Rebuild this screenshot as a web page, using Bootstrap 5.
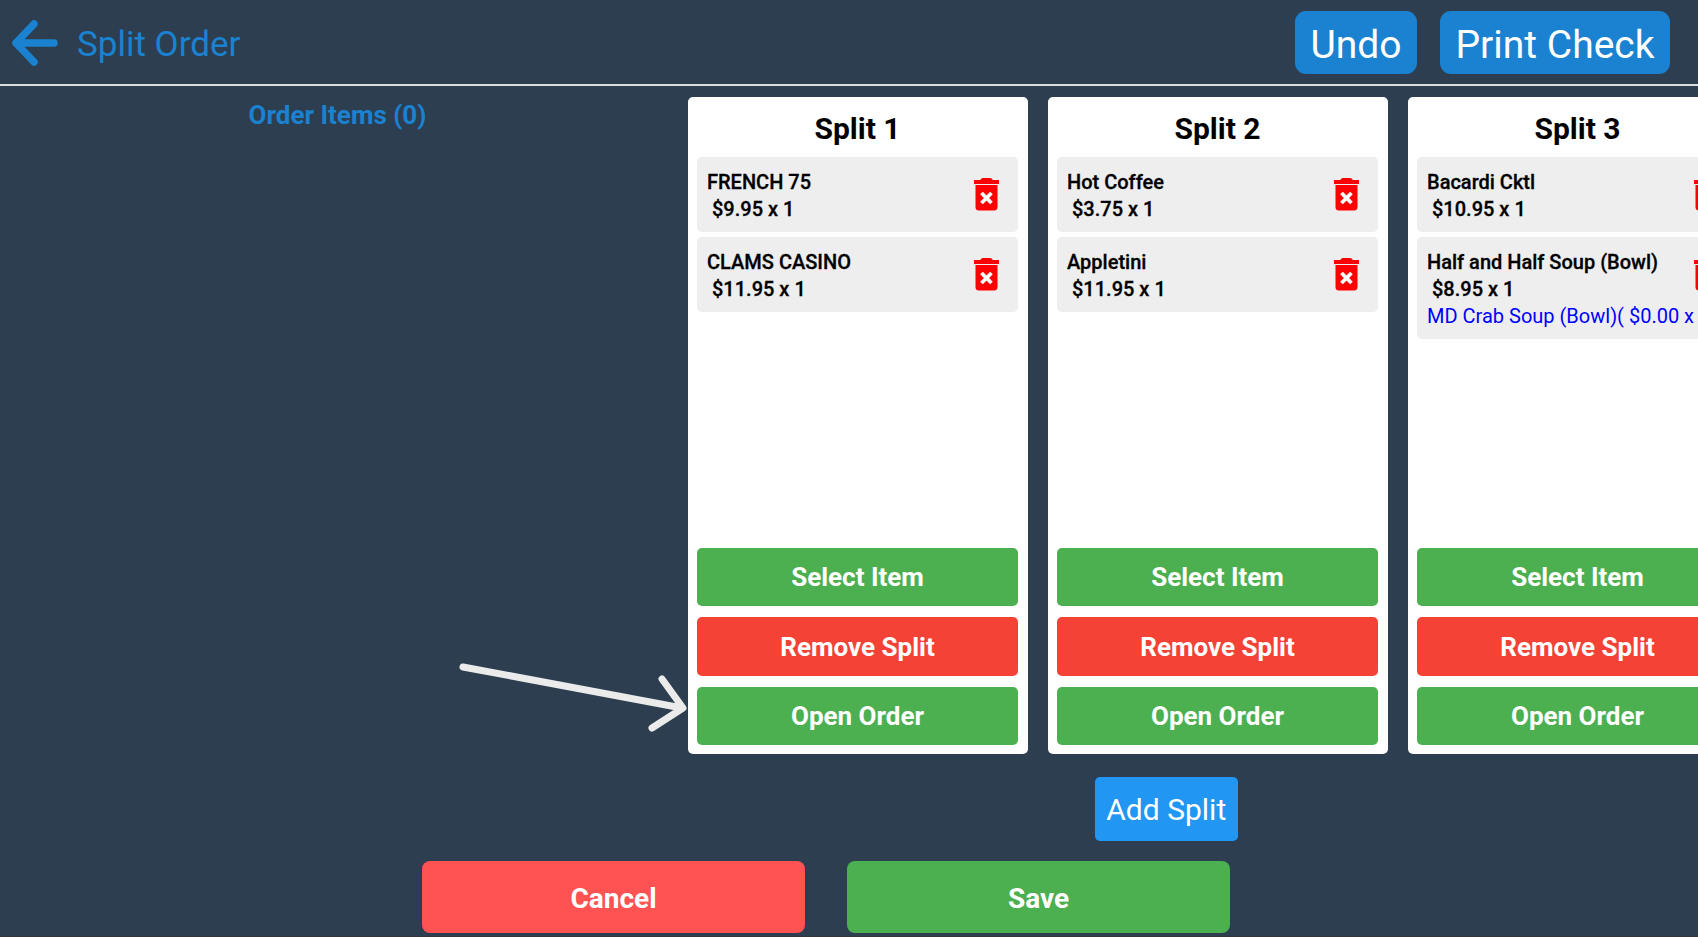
<!DOCTYPE html>
<html lang="en">
<head>
<meta charset="utf-8">
<title>Split Order</title>
<link href="https://cdn.jsdelivr.net/npm/bootstrap@5.3.0/dist/css/bootstrap.min.css" rel="stylesheet">
<style>
html { height: 100%; background: #33363a; overflow: hidden; }
body { height: 935.5px; background: #2c3e50; font-family: Roboto, "Liberation Sans", sans-serif; overflow: hidden; position: relative; color: #000; }
.top-bar { height: 86px; border-bottom: 2px solid #ddd; padding: 11px 28px 0 13px; }
.back-ico { width: 46px; height: 42px; margin-top: 11px; overflow: visible; }
.page-title { color: #1a82d0; font-size: 35px; line-height: 42px; margin: 13px 0 0 18px; font-weight: 400; }
.top-btn { background: #1a82d0; color: #fff; font-size: 39px; line-height: 46px; border: 0; border-radius: 11px; height: 63px; padding: 11px 15.500px 6px; }
.top-btn + .top-btn { margin-left: 23px; }
.content-row { height: 755px; }
.left-col { width: 675px; flex: none; text-align: center; padding-top: 14px; }
.left-title { color: #1a82d0; font-size: 26px; font-weight: 700; line-height: 30px; }
.right-col { width: 983px; flex: none; padding: 11px 0 0 12.500px; }
.split-strip { gap: 20px; }
.split-panel { width: 340px; height: 657px; flex: none; background: #fff; border-radius: 5px; padding: 0 9.500px 9px; }
.split-title { font-size: 30px; font-weight: 700; text-align: center; line-height: 36px; padding: 14px 0 10px; }
.order-line { background: #eee; border-radius: 5px; padding: 12px 10px 9px; font-size: 20px; line-height: 27px; font-weight: 500; margin-bottom: 5px; white-space: nowrap; overflow: hidden; -webkit-text-stroke: 0.3px #000; }
.price-line { padding-left: 5px; }
.mod-line { color: #00f; font-weight: 400; -webkit-text-stroke: 0; }
.trash-ico { width: 25px; height: 33px; flex: none; margin: 9px 9px 0 0; }
.order-text { flex: 1 1 auto; min-width: 0; }
.act-btn { display: block; width: 100%; height: 58.500px; border: 0; border-radius: 5px; color: #fff; font-size: 26px; font-weight: 700; margin-top: 11px; padding: 2px 0 0; }
.act-green { background: #4caf50; }
.act-red { background: #f44336; }
.add-wrap { padding: 23px 13px 0 0; }
.add-btn { background: #2196f3; color: #fff; border: 0; border-radius: 5px; width: 143px; height: 64px; font-size: 30px; padding: 0; }
.foot-row { gap: 42px; padding: 20px 46px 0 0; }
.foot-btn { width: 383px; height: 72px; border: 0; border-radius: 8px; color: #fff; font-size: 28px; font-weight: 700; padding: 4px 0 0; }
.foot-red { background: #ff5252; }
.foot-green { background: #4caf50; }
.note-arrow { position: absolute; left: 450px; top: 650px; width: 250px; height: 90px; pointer-events: none; }
</style>
</head>
<body>
<svg width="0" height="0" class="d-block position-absolute">
  <symbol id="trash" viewBox="0 0 25 33">
    <path d="M6 2.500Q6.500 0 9 0H16Q18.500 0 19 2.500Z" fill="#f00"/>
    <rect x="0" y="2" width="25" height="4" fill="#f00"/>
    <path d="M1.500 7H23.500V29Q23.500 32.500 20 32.500H5Q1.500 32.500 1.500 29Z" fill="#f00"/>
    <path d="M7.500 15L17.500 25M17.500 15L7.500 25" stroke="#fff" stroke-width="3.800" fill="none"/>
  </symbol>
</svg>

<header class="top-bar d-flex justify-content-between">
  <div class="d-flex">
    <svg class="back-ico" viewBox="0 0 46 42" aria-hidden="true"><path d="M3 21H41M21 2L3 21L21 40" fill="none" stroke="#1a82d0" stroke-width="7.500" stroke-linecap="round" stroke-linejoin="round"/></svg>
    <h1 class="page-title">Split Order</h1>
  </div>
  <div class="d-flex">
    <button class="top-btn">Undo</button>
    <button class="top-btn">Print Check</button>
  </div>
</header>

<main class="content-row d-flex">
  <div class="left-col"><div class="left-title">Order Items (0)</div></div>
  <div class="right-col">
    <div class="split-strip d-flex">
      <section class="split-panel d-flex flex-column">
        <div class="split-title">Split 1</div>
        <div class="order-line d-flex"><div class="order-text">FRENCH 75<div class="price-line">$9.95 x 1</div></div><svg class="trash-ico"><use href="#trash"/></svg></div>
        <div class="order-line d-flex"><div class="order-text">CLAMS CASINO<div class="price-line">$11.95 x 1</div></div><svg class="trash-ico"><use href="#trash"/></svg></div>
        <div class="mt-auto">
          <button class="act-btn act-green">Select Item</button>
          <button class="act-btn act-red">Remove Split</button>
          <button class="act-btn act-green">Open Order</button>
        </div>
      </section>
      <section class="split-panel d-flex flex-column">
        <div class="split-title">Split 2</div>
        <div class="order-line d-flex"><div class="order-text">Hot Coffee<div class="price-line">$3.75 x 1</div></div><svg class="trash-ico"><use href="#trash"/></svg></div>
        <div class="order-line d-flex"><div class="order-text">Appletini<div class="price-line">$11.95 x 1</div></div><svg class="trash-ico"><use href="#trash"/></svg></div>
        <div class="mt-auto">
          <button class="act-btn act-green">Select Item</button>
          <button class="act-btn act-red">Remove Split</button>
          <button class="act-btn act-green">Open Order</button>
        </div>
      </section>
      <section class="split-panel d-flex flex-column">
        <div class="split-title">Split 3</div>
        <div class="order-line d-flex"><div class="order-text">Bacardi Cktl<div class="price-line">$10.95 x 1</div></div><svg class="trash-ico"><use href="#trash"/></svg></div>
        <div class="order-line d-flex"><div class="order-text">Half and Half Soup (Bowl)<div class="price-line">$8.95 x 1</div><div class="mod-line">MD Crab Soup (Bowl)( $0.00 x 1)</div></div><svg class="trash-ico"><use href="#trash"/></svg></div>
        <div class="mt-auto">
          <button class="act-btn act-green">Select Item</button>
          <button class="act-btn act-red">Remove Split</button>
          <button class="act-btn act-green">Open Order</button>
        </div>
      </section>
    </div>
    <div class="add-wrap d-flex justify-content-center"><button class="add-btn">Add Split</button></div>
  </div>
</main>

<footer class="foot-row d-flex justify-content-center">
  <button class="foot-btn foot-red">Cancel</button>
  <button class="foot-btn foot-green">Save</button>
</footer>

<svg class="note-arrow" viewBox="0 0 250 90" aria-hidden="true"><path d="M13 17L232 58M212 29L233 58L202 78" fill="none" stroke="#ebebeb" stroke-width="7" stroke-linecap="round" stroke-linejoin="round"/></svg>

<script src="https://cdn.jsdelivr.net/npm/bootstrap@5.3.0/dist/js/bootstrap.bundle.min.js"></script>
</body>
</html>
